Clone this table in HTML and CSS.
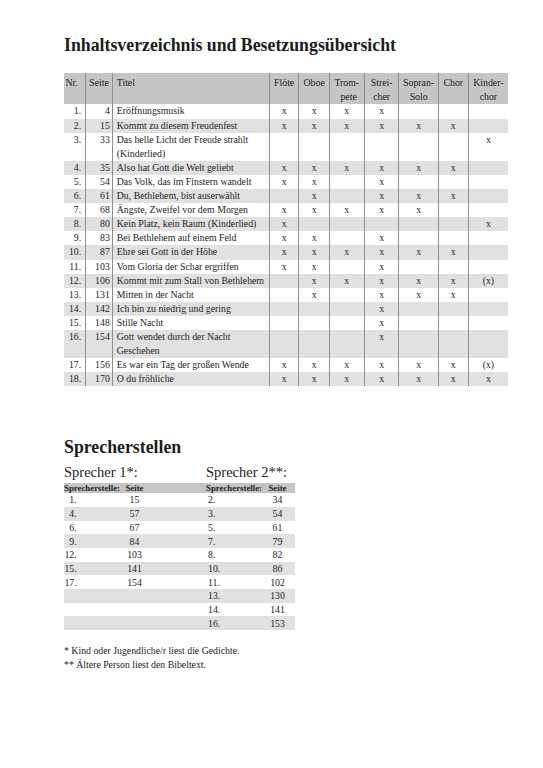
FILE: index.html
```html
<!DOCTYPE html>
<html lang="de">
<head>
<meta charset="utf-8">
<title>Inhaltsverzeichnis und Besetzungsübersicht</title>
<link rel="stylesheet" href="styles.css">
</head>
<body>
<div class="page">
  <h1 class="title">Inhaltsverzeichnis und Besetzungsübersicht</h1>

  <table class="contents">
    <colgroup>
      <col class="c-nr"><col class="c-seite"><col class="c-titel">
      <col class="c-floete"><col class="c-oboe"><col class="c-trompete">
      <col class="c-streicher"><col class="c-sopran"><col class="c-chor"><col class="c-kinder">
    </colgroup>
    <thead>
      <tr>
        <th class="h-nr">Nr.</th>
        <th class="h-center">Seite</th>
        <th class="h-titel">Titel</th>
        <th class="h-center">Flöte</th>
        <th class="h-center">Oboe</th>
        <th class="h-center">Trom-<span class="pete">pete</span></th>
        <th class="h-center">Strei-<br>cher</th>
        <th class="h-center">Sopran-<br>Solo</th>
        <th class="h-center">Chor</th>
        <th class="h-center">Kinder-<br>chor</th>
      </tr>
    </thead>
    <tbody>
      <tr><td class="nr">1.</td><td class="pg">4</td><td class="ti">Eröffnungsmusik</td><td class="m">x</td><td class="m">x</td><td class="m">x</td><td class="m">x</td><td class="m"></td><td class="m"></td><td class="m"></td></tr>
      <tr><td class="nr">2.</td><td class="pg">15</td><td class="ti">Kommt zu diesem Freudenfest</td><td class="m">x</td><td class="m">x</td><td class="m">x</td><td class="m">x</td><td class="m">x</td><td class="m">x</td><td class="m"></td></tr>
      <tr><td class="nr">3.</td><td class="pg">33</td><td class="ti">Das helle Licht der Freude strahlt<br>(Kinderlied)</td><td class="m"></td><td class="m"></td><td class="m"></td><td class="m"></td><td class="m"></td><td class="m"></td><td class="m">x</td></tr>
      <tr><td class="nr">4.</td><td class="pg">35</td><td class="ti">Also hat Gott die Welt geliebt</td><td class="m">x</td><td class="m">x</td><td class="m">x</td><td class="m">x</td><td class="m">x</td><td class="m">x</td><td class="m"></td></tr>
      <tr><td class="nr">5.</td><td class="pg">54</td><td class="ti">Das Volk, das im Finstern wandelt</td><td class="m">x</td><td class="m">x</td><td class="m"></td><td class="m">x</td><td class="m"></td><td class="m"></td><td class="m"></td></tr>
      <tr><td class="nr">6.</td><td class="pg">61</td><td class="ti">Du, Bethlehem, bist auserwählt</td><td class="m"></td><td class="m">x</td><td class="m"></td><td class="m">x</td><td class="m">x</td><td class="m">x</td><td class="m"></td></tr>
      <tr><td class="nr">7.</td><td class="pg">68</td><td class="ti">Ängste, Zweifel vor dem Morgen</td><td class="m">x</td><td class="m">x</td><td class="m">x</td><td class="m">x</td><td class="m">x</td><td class="m"></td><td class="m"></td></tr>
      <tr><td class="nr">8.</td><td class="pg">80</td><td class="ti">Kein Platz, kein Raum (Kinderlied)</td><td class="m">x</td><td class="m"></td><td class="m"></td><td class="m"></td><td class="m"></td><td class="m"></td><td class="m">x</td></tr>
      <tr><td class="nr">9.</td><td class="pg">83</td><td class="ti">Bei Bethlehem auf einem Feld</td><td class="m">x</td><td class="m">x</td><td class="m"></td><td class="m">x</td><td class="m"></td><td class="m"></td><td class="m"></td></tr>
      <tr><td class="nr">10.</td><td class="pg">87</td><td class="ti">Ehre sei Gott in der Höhe</td><td class="m">x</td><td class="m">x</td><td class="m">x</td><td class="m">x</td><td class="m">x</td><td class="m">x</td><td class="m"></td></tr>
      <tr><td class="nr">11.</td><td class="pg">103</td><td class="ti">Vom Gloria der Schar ergriffen</td><td class="m">x</td><td class="m">x</td><td class="m"></td><td class="m">x</td><td class="m"></td><td class="m"></td><td class="m"></td></tr>
      <tr><td class="nr">12.</td><td class="pg">106</td><td class="ti">Kommt mit zum Stall von Bethlehem</td><td class="m"></td><td class="m">x</td><td class="m">x</td><td class="m">x</td><td class="m">x</td><td class="m">x</td><td class="m">(x)</td></tr>
      <tr><td class="nr">13.</td><td class="pg">131</td><td class="ti">Mitten in der Nacht</td><td class="m"></td><td class="m">x</td><td class="m"></td><td class="m">x</td><td class="m">x</td><td class="m">x</td><td class="m"></td></tr>
      <tr><td class="nr">14.</td><td class="pg">142</td><td class="ti">Ich bin zu niedrig und gering</td><td class="m"></td><td class="m"></td><td class="m"></td><td class="m">x</td><td class="m"></td><td class="m"></td><td class="m"></td></tr>
      <tr><td class="nr">15.</td><td class="pg">148</td><td class="ti">Stille Nacht</td><td class="m"></td><td class="m"></td><td class="m"></td><td class="m">x</td><td class="m"></td><td class="m"></td><td class="m"></td></tr>
      <tr><td class="nr">16.</td><td class="pg">154</td><td class="ti">Gott wendet durch der Nacht<br>Geschehen</td><td class="m"></td><td class="m"></td><td class="m"></td><td class="m">x</td><td class="m"></td><td class="m"></td><td class="m"></td></tr>
      <tr><td class="nr">17.</td><td class="pg">156</td><td class="ti">Es war ein Tag der großen Wende</td><td class="m">x</td><td class="m">x</td><td class="m">x</td><td class="m">x</td><td class="m">x</td><td class="m">x</td><td class="m">(x)</td></tr>
      <tr><td class="nr">18.</td><td class="pg">170</td><td class="ti">O du fröhliche</td><td class="m">x</td><td class="m">x</td><td class="m">x</td><td class="m">x</td><td class="m">x</td><td class="m">x</td><td class="m">x</td></tr>
    </tbody>
  </table>

  <h2 class="subtitle">Sprecherstellen</h2>

  <div class="speaker-labels">
    <div class="label label-1">Sprecher 1*:</div>
    <div class="label label-2">Sprecher 2**:</div>
  </div>

  <table class="speakers">
    <colgroup>
      <col class="s1"><col class="s2"><col class="s3"><col class="s4"><col class="s5">
    </colgroup>
    <thead>
      <tr><th>Sprecherstelle:</th><th class="sp-pg">Seite</th><th></th><th>Sprecherstelle:</th><th class="sp-pg sp-pg-r">Seite</th></tr>
    </thead>
    <tbody>
      <tr><td><span class="lnum">1.</span></td><td class="sp-pg">15</td><td></td><td class="rnum">2.</td><td class="sp-pg sp-pg-r">34</td></tr>
      <tr><td><span class="lnum">4.</span></td><td class="sp-pg">57</td><td></td><td class="rnum">3.</td><td class="sp-pg sp-pg-r">54</td></tr>
      <tr><td><span class="lnum">6.</span></td><td class="sp-pg">67</td><td></td><td class="rnum">5.</td><td class="sp-pg sp-pg-r">61</td></tr>
      <tr><td><span class="lnum">9.</span></td><td class="sp-pg">84</td><td></td><td class="rnum">7.</td><td class="sp-pg sp-pg-r">79</td></tr>
      <tr><td><span class="lnum">12.</span></td><td class="sp-pg">103</td><td></td><td class="rnum">8.</td><td class="sp-pg sp-pg-r">82</td></tr>
      <tr><td><span class="lnum">15.</span></td><td class="sp-pg">141</td><td></td><td class="rnum">10.</td><td class="sp-pg sp-pg-r">86</td></tr>
      <tr><td><span class="lnum">17.</span></td><td class="sp-pg">154</td><td></td><td class="rnum">11.</td><td class="sp-pg sp-pg-r">102</td></tr>
      <tr><td></td><td class="sp-pg"></td><td></td><td class="rnum">13.</td><td class="sp-pg sp-pg-r">130</td></tr>
      <tr><td></td><td class="sp-pg"></td><td></td><td class="rnum">14.</td><td class="sp-pg sp-pg-r">141</td></tr>
      <tr><td></td><td class="sp-pg"></td><td></td><td class="rnum">16.</td><td class="sp-pg sp-pg-r">153</td></tr>
    </tbody>
  </table>

  <div class="notes">
    <p>* Kind oder Jugendliche/r liest die Gedichte.</p>
    <p>** Ältere Person liest den Bibeltext.</p>
  </div>
</div>
</body>
</html>
```

FILE: styles.css
```css
html, body {
  margin: 0;
  padding: 0;
  background: #ffffff;
}

body {
  font-family: "Liberation Serif", "Times New Roman", serif;
  color: #1c1c1c;
}

.page {
  width: 444px;
  padding: 35px 0 0 64px;
}

.title {
  font-size: 17.8px;
  line-height: 20px;
  font-weight: bold;
  margin: 0 0 18.3px 0;
}

/* main contents table */
.contents {
  width: 444px;
  border-collapse: collapse;
  table-layout: fixed;
  font-size: 9.8px;
  line-height: 14.1px;
}

.c-nr { width: 21.7px; }
.c-seite { width: 26.6px; }
.c-titel { width: 157px; }
.c-floete { width: 29.7px; }
.c-oboe { width: 30.3px; }
.c-trompete { width: 35px; }
.c-streicher { width: 34.7px; }
.c-sopran { width: 39.3px; }
.c-chor { width: 30px; }
.c-kinder { width: 39.7px; }

.contents th {
  background: #c5c5c5;
  font-weight: normal;
  vertical-align: top;
  padding: 3px 0 0 0;
}

.contents th + th,
.contents td + td {
  border-left: 1px solid #8e8e8e;
}

.contents td {
  padding: 0;
  vertical-align: top;
}

.contents tbody tr:nth-child(even) td {
  background: #e1e1e1;
}

.h-nr {
  text-align: left;
  padding-left: 1.5px !important;
}

.h-center {
  text-align: center;
}

.h-titel {
  text-align: left;
  padding-left: 4px !important;
}

.pete {
  display: block;
  text-align: right;
  padding-right: 7px;
}

.nr {
  text-align: right;
  padding-right: 4px !important;
}

.pg {
  text-align: right;
  padding-right: 2px !important;
}

.ti {
  text-align: left;
  padding-left: 4px !important;
}

.m {
  text-align: center;
}

/* Sprecherstellen */
.subtitle {
  font-size: 17.8px;
  line-height: 20px;
  font-weight: bold;
  margin: 50.8px 0 6.5px 0;
}

.speaker-labels {
  display: flex;
  width: 231px;
}

.label {
  font-size: 14.5px;
  line-height: 17px;
  padding-bottom: 2.5px;
}

.label-1 {
  width: 142px;
}

.label-2 {
  flex: 1;
}

.speakers {
  width: 231px;
  border-collapse: collapse;
  table-layout: fixed;
  font-size: 9.8px;
}

.s1 { width: 59px; }
.s2 { width: 23px; }
.s3 { width: 60px; }
.s4 { width: 60px; }
.s5 { width: 29px; }

.speakers th {
  background: #c5c5c5;
  font-size: 8.8px;
  line-height: 10px;
  font-weight: bold;
  text-align: left;
  padding: 0;
  white-space: nowrap;
}

.speakers td {
  padding: 1.3px 0 0 0;
  line-height: 12.4px;
  text-align: left;
}

.speakers tbody tr:nth-child(even) td {
  background: #e1e1e1;
}

.speakers .sp-pg {
  text-align: center;
}

.speakers .sp-pg-r {
  padding-right: 6px;
}

.lnum {
  display: inline-block;
  width: 12.7px;
  text-align: right;
}

.speakers .rnum {
  padding-left: 2px;
}

.notes {
  margin-top: 13.7px;
  font-size: 9.8px;
  line-height: 14px;
}

.notes p {
  margin: 0;
}
```
